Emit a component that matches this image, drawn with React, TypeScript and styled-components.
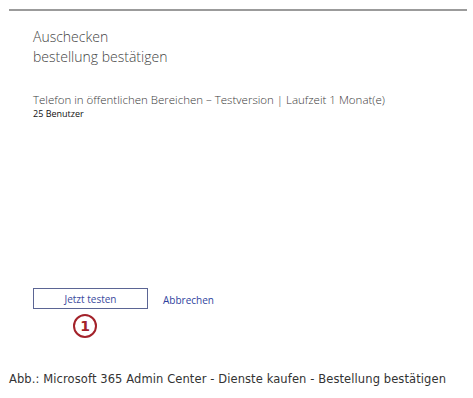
import styled, { createGlobalStyle } from "styled-components";

const GlobalStyle = createGlobalStyle`
  html, body {
    margin: 0;
    padding: 0;
    background: #ffffff;
  }
  body {
    font-family: "Open Sans", "Liberation Sans", sans-serif;
  }
`;

const Page = styled.div`
  width: 473px;
  height: 398px;
  display: flex;
  flex-direction: column;
  background: #ffffff;
`;

const TopRule = styled.div`
  height: 2px;
  margin: 9px 6px 0 9px;
  background: #9b9b9b;
`;

const Panel = styled.div`
  display: flex;
  flex-direction: column;
  padding: 16px 0 0 33px;
  flex: 1;
`;

const Title = styled.div`
  font-weight: 300;
  font-size: 14px;
  line-height: 20px;
  color: #444444;
`;

const Product = styled.div`
  margin-top: 25px;
  font-weight: 300;
  font-size: 11.5px;
  line-height: 16px;
  color: #3a3a3a;
`;

const Users = styled.div`
  font-size: 9px;
  line-height: 12px;
  color: #111111;
`;

const Actions = styled.div`
  margin-top: auto;
  display: flex;
  align-items: flex-start;
  gap: 15px;
`;

const ButtonColumn = styled.div`
  display: flex;
  flex-direction: column;
  align-items: center;
  gap: 5px;
`;

const PrimaryButton = styled.button`
  width: 115px;
  height: 21px;
  padding: 0;
  border: 1px solid #5b6594;
  background: #ffffff;
  color: #3b4a9e;
  font-family: "Open Sans", "Liberation Sans", sans-serif;
  font-size: 10px;
  cursor: pointer;
`;

const CancelLink = styled.a`
  margin-top: 4px;
  color: #2f3f9e;
  font-size: 10px;
  line-height: 16px;
  text-decoration: none;
  cursor: pointer;
`;

const Marker = styled.div`
  width: 20px;
  height: 20px;
  margin-right: 11px;
  border: 2px solid #a3222a;
  border-radius: 50%;
  display: flex;
  align-items: center;
  justify-content: center;
  color: #a3222a;
  font-family: "DejaVu Sans", sans-serif;
  font-size: 14px;
  font-weight: 600;
`;

const Caption = styled.div`
  padding: 34px 0 12px 9px;
  font-family: "DejaVu Sans", sans-serif;
  font-size: 11.5px;
  letter-spacing: 0.1px;
  color: #333333;
`;

const App = () => {
  return (
    <Page>
      <GlobalStyle />
      <TopRule />
      <Panel>
        <Title>Auschecken</Title>
        <Title>bestellung bestätigen</Title>
        <Product>Telefon in öffentlichen Bereichen – Testversion | Laufzeit 1 Monat(e)</Product>
        <Users>25 Benutzer</Users>
        <Actions>
          <ButtonColumn>
            <PrimaryButton>Jetzt testen</PrimaryButton>
            <Marker>1</Marker>
          </ButtonColumn>
          <CancelLink>Abbrechen</CancelLink>
        </Actions>
      </Panel>
      <Caption>Abb.: Microsoft 365 Admin Center - Dienste kaufen - Bestellung bestätigen</Caption>
    </Page>
  );
};

export default App;
